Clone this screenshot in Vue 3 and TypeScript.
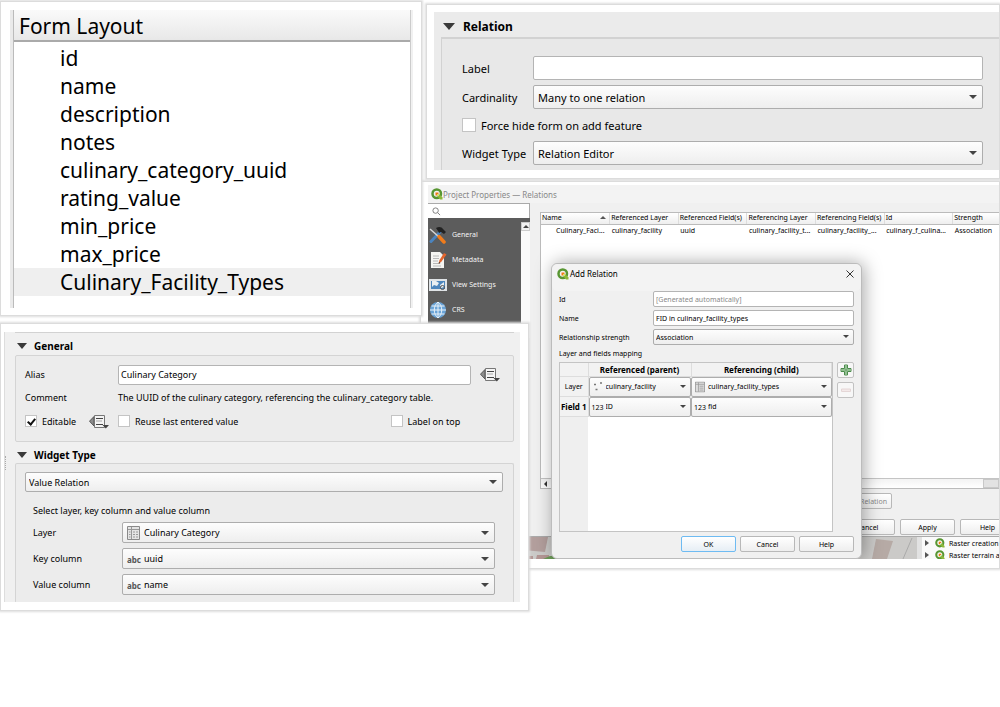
<script setup lang="ts">
import { ref } from 'vue'

const fields: string[] = [
  'id', 'name', 'description', 'notes', 'culinary_category_uuid',
  'rating_value', 'min_price', 'max_price', 'Culinary_Facility_Types',
]
const selected = ref('Culinary_Facility_Types')
const columns: string[] = ['Name', 'Referenced Layer', 'Referenced Field(s)', 'Referencing Layer', 'Referencing Field(s)', 'Id', 'Strength']
const relation: string[] = ['Culinary_Faci...', 'culinary_facility', 'uuid', 'culinary_facility_t...', 'culinary_facility_...', 'culinary_f_culina...', 'Association']
const tools: string[] = ['Raster creation', 'Raster terrain a']
const alias = ref('Culinary Category')
const relationLabel = ref('')
const relationName = ref('FID in culinary_facility_types')
const editable = ref(true)
const reuse = ref(false)
const labelOnTop = ref(false)
const forceHide = ref(false)
</script>

<template>
  <main class="board">
    <div class="left">
      <section class="card form-card">
        <div class="form-list">
          <h2>Form Layout</h2>
          <ul>
            <li v-for="f in fields" :key="f" :class="{ on: f === selected }" @click="selected = f">{{ f }}</li>
          </ul>
        </div>
      </section>

      <section class="card general-card">
        <div class="general-panel">
          <div class="rule"></div>
          <h3><i class="fold"></i>General</h3>
          <div class="group general-group">
            <label for="alias">Alias</label>
            <div class="alias-row">
              <input id="alias" v-model="alias" type="text" class="text" />
              <button class="override" aria-label="Alias override">
                <svg viewBox="0 0 20 15"><path d="M5 2.500V12L0.500 7.200Z" fill="#8c8c8c" stroke="#555" /><path d="M5.500 1.500h10v12h-10z" fill="#f4f4f4" stroke="#777" /><path d="M7 4.500h7M7 10.500h7" stroke="#444" stroke-width="1.200" /><path d="M7 7h6" stroke="#aaa" /><path d="M13.500 11H20l-3.200 3.500z" fill="#444" /></svg>
              </button>
            </div>
            <span>Comment</span>
            <span>The UUID of the culinary category, referencing the culinary_category table.</span>
            <div class="edit-row">
              <label class="check"><input v-model="editable" type="checkbox" />Editable</label>
              <button class="override" aria-label="Editable override">
                <svg viewBox="0 0 20 15"><path d="M5 2.500V12L0.500 7.200Z" fill="#8c8c8c" stroke="#555" /><path d="M5.500 1.500h10v12h-10z" fill="#f4f4f4" stroke="#777" /><path d="M7 4.500h7M7 10.500h7" stroke="#444" stroke-width="1.200" /><path d="M7 7h6" stroke="#aaa" /><path d="M13.500 11H20l-3.200 3.500z" fill="#444" /></svg>
              </button>
            </div>
            <div class="reuse-row">
              <label class="check"><input v-model="reuse" type="checkbox" />Reuse last entered value</label>
              <label class="check"><input v-model="labelOnTop" type="checkbox" />Label on top</label>
            </div>
          </div>
          <h3><i class="fold"></i>Widget Type</h3>
          <div class="group widget-group">
            <div class="combo"><select aria-label="Widget type"><option>Value Relation</option></select></div>
            <div class="columns">
              <p>Select layer, key column and value column</p>
              <label for="vr-layer">Layer</label>
              <div class="combo with-icon">
                <svg class="sheet" viewBox="0 0 13 14"><path d="M.5.5h12v13H.5z" fill="#e4e4e4" stroke="#8a8a8a" /><path d="M1 3.500h11M4.500 1v12M6 6h2M9 6h2M6 8.500h2M9 8.500h2M6 11h2M9 11h2M2 6h1.500M2 8.500h1.500M2 11h1.500" stroke="#999" /></svg>
                <select id="vr-layer"><option>Culinary Category</option></select>
              </div>
              <label for="vr-key">Key column</label>
              <div class="combo with-icon"><b class="type">abc</b><select id="vr-key"><option>uuid</option></select></div>
              <label for="vr-value">Value column</label>
              <div class="combo with-icon"><b class="type">abc</b><select id="vr-value"><option>name</option></select></div>
            </div>
          </div>
        </div>
      </section>
    </div>

    <div class="right">
      <section class="card relation-card">
        <div class="relation-panel">
          <h3><i class="fold"></i>Relation</h3>
          <div class="relation-group">
            <label for="rel-label">Label</label>
            <input id="rel-label" v-model="relationLabel" type="text" class="text" />
            <label for="rel-card">Cardinality</label>
            <div class="combo"><select id="rel-card"><option>Many to one relation</option></select></div>
            <label class="check wide"><input v-model="forceHide" type="checkbox" />Force hide form on add feature</label>
            <label for="rel-widget">Widget Type</label>
            <div class="combo"><select id="rel-widget"><option>Relation Editor</option></select></div>
          </div>
        </div>
      </section>

      <section class="card project-card">
        <div class="desktop">
          <div class="window">
            <header class="titlebar">
              <svg class="logo" viewBox="0 0 24 24"><circle cx="11.500" cy="11.500" r="8.500" fill="none" stroke="#589632" stroke-width="5" /><path d="M13 13h4l6 6v4h-5l-5-6z" fill="#8cb83a" /><path d="M9 9h6v3h-3v3H9z" fill="#ee7913" /><path d="M12 12l4 4" stroke="#f0e64a" stroke-width="2" /></svg>
              <span>Project Properties — Relations</span>
            </header>
            <div class="window-body">
              <aside class="side">
                <div class="search">
                  <svg viewBox="0 0 10 10"><circle cx="4" cy="4" r="3" fill="none" stroke="#777" /><path d="M6.200 6.200 9 9" stroke="#777" /></svg>
                  <input type="text" aria-label="Search settings" />
                </div>
                <div class="side-body">
                  <nav>
                    <a href="#general">
                      <svg viewBox="0 0 18 18"><path d="M2 15.500 11 6" stroke="#4b84bf" stroke-width="3" stroke-linecap="round" /><path d="M1 3l9 8" stroke="#d6d6d6" stroke-width="1.500" /><path d="M10 10.500 15 16" stroke="#f07c1c" stroke-width="3.500" stroke-linecap="round" /><path d="M7 2c3-2 6-1 7 1l3 3-2 2-3-2-2 1-1-2z" fill="#222" /></svg>General
                    </a>
                    <a href="#metadata">
                      <svg viewBox="0 0 18 18"><path d="M2 1h9l4 4v12H2z" fill="#f5f5f2" /><path d="M4 5h6M4 7.500h6M4 10h5M4 12.500h5M4 15h8" stroke="#b8b8b8" /><path d="m9.500 13 1-4L15 2l2.500 1.500-5 7z" fill="#e4652d" /><path d="m9.500 13 .5-2 1.500 1z" fill="#333" /></svg>Metadata
                    </a>
                    <a href="#view">
                      <svg viewBox="0 0 18 18"><path d="M0 3h18v12H0z" fill="#dfe3e6" /><path d="M2 5h14v8H2z" fill="#4d86bd" /><path d="M3 5h4l3 2-2 3-3-1-2 2zM11 9l4-3v5l-3 1z" fill="#e9eff3" /><circle cx="13.500" cy="11.500" r="2" fill="none" stroke="#555" /></svg>View Settings
                    </a>
                    <a href="#crs">
                      <svg viewBox="0 0 18 18"><circle cx="9" cy="9" r="8" fill="#6aa4d8" /><path d="M1 9h16M2.500 5h13M2.500 13h13M9 1v16M9 1c-5 4-5 12 0 16M9 1c5 4 5 12 0 16" fill="none" stroke="#e8f1f8" /></svg>CRS
                    </a>
                  </nav>
                  <div class="scroll"><i class="up"></i></div>
                </div>
              </aside>
              <div class="content">
                <div class="table-wrap">
                  <table class="relations">
                    <thead><tr><th v-for="(c, i) in columns" :key="c">{{ c }}<i v-if="i === 0" class="sort"></i></th></tr></thead>
                    <tbody><tr><td v-for="c in relation" :key="c">{{ c }}</td></tr></tbody>
                  </table>
                  <div class="hscroll"><i class="back"></i><span></span></div>
                </div>
                <div class="actions tools"><button disabled>Relation</button></div>
                <div class="actions"><button>Cancel</button><button>Apply</button><button>Help</button></div>
              </div>
            </div>
          </div>
          <div class="below">
            <svg class="map" viewBox="0 0 490 22" preserveAspectRatio="xMaxYMin slice"><path d="M0 0h490v22H0z" fill="#cbcac8" /><path d="M96 0h25l-3 15-22-2z" fill="#b39f9d" /><path d="M100 19h6v3h-6zm10-1h12v4h-13z" fill="#b39694" /><path d="m116 22 7-3h8v3z" fill="#6b9a57" /><path d="m449 2 17 2-6 18h-15z" fill="#b6aaa5" /><path d="m485 1-9 21" stroke="#aaa" /></svg>
            <div class="tree">
              <div v-for="t in tools" :key="t">
                <i class="caret"></i>
                <svg class="logo" viewBox="0 0 24 24"><circle cx="11.500" cy="11.500" r="8.500" fill="none" stroke="#589632" stroke-width="5" /><path d="M13 13h4l6 6v4h-5l-5-6z" fill="#8cb83a" /><path d="M9 9h6v3h-3v3H9z" fill="#ee7913" /></svg>
                <span>{{ t }}</span>
              </div>
            </div>
          </div>

          <div class="dialog" role="dialog" aria-label="Add Relation">
            <header class="dialog-title">
              <svg class="logo" viewBox="0 0 24 24"><circle cx="11.500" cy="11.500" r="8.500" fill="none" stroke="#589632" stroke-width="5" /><path d="M13 13h4l6 6v4h-5l-5-6z" fill="#8cb83a" /><path d="M9 9h6v3h-3v3H9z" fill="#ee7913" /><path d="M12 12l4 4" stroke="#f0e64a" stroke-width="2" /></svg>
              <span>Add Relation</span>
              <button aria-label="Close"><svg viewBox="0 0 8 8"><path d="M.5.5l7 7M7.500.5l-7 7" stroke="#333" /></svg></button>
            </header>
            <div class="dialog-form">
              <label for="d-id">Id</label><input id="d-id" type="text" class="text" placeholder="[Generated automatically]" />
              <label for="d-name">Name</label><input id="d-name" v-model="relationName" type="text" class="text" />
              <label for="d-str">Relationship strength</label><div class="combo"><select id="d-str"><option>Association</option></select></div>
            </div>
            <p>Layer and fields mapping</p>
            <div class="mapping">
              <div class="mapping-box">
                <table>
                  <colgroup><col class="c0" /><col class="c1" /><col /></colgroup>
                  <thead><tr><th></th><th>Referenced (parent)</th><th>Referencing (child)</th></tr></thead>
                  <tbody>
                    <tr>
                      <th class="plain">Layer</th>
                      <td><div class="combo with-icon"><svg class="sheet" viewBox="0 0 10 11"><path d="M1 3h2M7 1.500h2M2.500 8h2" stroke="#777" stroke-width="1.500" /></svg><select aria-label="Referenced layer"><option>culinary_facility</option></select></div></td>
                      <td><div class="combo with-icon"><svg class="sheet" viewBox="0 0 13 14"><path d="M.5.5h12v13H.5z" fill="#ddd" stroke="#888" /><path d="M1 3.500h11M4.500 1v12M6 6h5M6 8.500h5M6 11h5" stroke="#999" /></svg><select aria-label="Referencing layer"><option>culinary_facility_types</option></select></div></td>
                    </tr>
                    <tr>
                      <th>Field 1</th>
                      <td><div class="combo with-icon"><span class="type">123</span><select aria-label="Referenced field"><option>ID</option></select></div></td>
                      <td><div class="combo with-icon"><span class="type">123</span><select aria-label="Referencing field"><option>fid</option></select></div></td>
                    </tr>
                  </tbody>
                </table>
                <div class="blank"></div>
              </div>
              <div class="side-buttons">
                <button aria-label="Add field"><svg viewBox="0 0 12 12"><path d="M4.500 1h3v3.500H11v3H7.500V11h-3V7.500H1v-3h3.500z" fill="#c6e2c4" stroke="#4b8a4b" /><path d="M6 2v8M2 6h8" stroke="#5f9c5f" /></svg></button>
                <button aria-label="Remove field" disabled><svg viewBox="0 0 12 12"><path d="M1.500 5h9v2.500h-9z" fill="#f3e9e9" stroke="#e4d6d6" /></svg></button>
              </div>
            </div>
            <footer><button class="ok">OK</button><button>Cancel</button><button>Help</button></footer>
          </div>
        </div>
      </section>
    </div>
  </main>
</template>

<style>
body { background: #fff; }
</style>

<style scoped>
* { box-sizing: border-box; }
.board { display: flex; align-items: flex-start; min-height: 100vh; overflow: hidden; font-family: "Noto Sans", "Open Sans", sans-serif; color: #000; }
h2, h3, p, ul { margin: 0; padding: 0; list-style: none; }
.card { background: #fff; border: 1px solid #dcdcdc; box-shadow: 0 0 2px 1px #ddd; }
.left { width: 42%; flex: none; position: relative; z-index: 2; }
.right { flex: 1; min-width: 0; }

.form-card { margin: 1px 0 0; padding: 8px 10px 7px 8px; width: calc(100% + 2px); }
.form-list { border-left: 1px solid #bbb; border-right: 1px solid #ccc; box-shadow: -3px 0 0 #eaeaea, 2px 0 0 #f1f1f1; margin-left: 4px; min-height: 298px; }
.form-list h2 { font-size: 21px; font-weight: 400; line-height: 31px; height: 32px; padding: 1px 5px 0; background: linear-gradient(#fafafa, #e8e8e8); border-bottom: 2px solid #aaa; }
.form-list ul { padding-top: 2px; }
.form-list li { font-size: 21px; line-height: 28px; padding-left: 46px; }
.form-list li.on { background: #efefef; }

.general-card { width: 126%; margin-top: 7px; padding: 8px 8px 8px 1px; font-size: 9px; }
.general-panel { background: #f0f0f0; border-left: 1px solid #ddd; padding: 0 6px 0 10px; margin-left: 2px; overflow: hidden; height: 270px; position: relative; }
.general-panel::before { content: ""; position: absolute; left: 0; top: 124px; height: 14px; border-left: 1px dotted #aaa; }
.general-panel .rule { height: 1px; background: #d2d2d2; }
h3 { display: flex; align-items: center; font-weight: 700; }
.general-panel h3 { height: 22px; padding-top: 3px; font-size: 10px; }
.general-panel .group + h3 { height: 21px; padding-top: 4px; }
.fold { border: 5px solid transparent; border-top: 6px solid #3a3a3a; border-bottom: 0; margin: 0 7px 0 2px; }
.group { background: #ececec; border: 1px solid #d4d4d4; border-radius: 2px; }
.general-group { display: grid; grid-template-columns: 93px 1fr; grid-template-rows: 19px 25px 20px; row-gap: 1px; align-items: center; padding: 9px 9px 10px 9px; }
.alias-row { display: flex; gap: 9px; align-items: center; padding-right: 4px; }
.text { flex: 1; min-width: 0; width: 100%; height: 20px; border: 1px solid #b4b4b4; border-radius: 2px; background: #fff; font: inherit; color: inherit; padding: 0 2px; outline: 0; }
.override { border: 0; background: none; padding: 0; width: 20px; height: 15px; flex: none; }
.override svg { display: block; width: 20px; height: 15px; }
.edit-row, .reuse-row { display: flex; justify-content: space-between; align-items: center; }
.edit-row { padding-right: 9px; }
.reuse-row { padding-right: 44px; }
.check { display: flex; align-items: center; gap: 5px; }
.check input { appearance: none; width: 12px; height: 12px; margin: 0; background: #fff; border: 1px solid #c4c4c4; display: grid; place-items: center; }
.check input:checked::after { content: ""; width: 3px; height: 6px; border: solid #111; border-width: 0 2px 2px 0; transform: rotate(40deg); }
.combo { position: relative; min-width: 0; }
.combo select { display: block; appearance: none; width: 100%; height: 20px; border: 1px solid #adadad; border-radius: 2px; background: linear-gradient(#fdfdfd, #eee); font: inherit; color: inherit; padding: 0 14px 0 4px; }
.combo::after { content: ""; position: absolute; right: 6px; top: 50%; margin-top: -2px; border: 4px solid transparent; border-top-color: #444; border-bottom: 0; pointer-events: none; }
.with-icon .sheet, .with-icon .type { position: absolute; left: 5px; top: 50%; transform: translateY(-50%); pointer-events: none; }
.widget-group { padding: 8px 10px 0 9px; border-bottom: 0; height: 140px; }
.widget-group > .combo select { padding-left: 3px; }
.columns { display: grid; grid-template-columns: 89px 1fr; row-gap: 5px; align-items: center; padding: 10px 8px 0; }
.columns p { grid-column: 1 / 3; line-height: 18px; margin-bottom: -3px; }
.columns .with-icon select { height: 21px; padding-left: 21px; }
.columns .sheet { width: 13px; height: 14px; }
.columns .type { font-size: 8px; color: #555; }

.relation-card { margin: 4px 0 0 6px; padding: 7px 0 8px 7px; font-size: 11px; }
.relation-panel { background: #ebebeb; padding: 0 0 0 7px; height: 158px; }
.relation-panel h3 { height: 25px; padding-top: 3px; font-size: 12px; }
.relation-panel .fold { margin: 0 8px 0 2px; border-width: 7px 6px 0; }
.relation-group { display: grid; grid-template-columns: 71px 1fr; grid-template-rows: 24px 24px 22px 24px; row-gap: 5px; align-items: center; background: #e8e8e8; border: 1px solid #d2d2d2; border-width: 2px 0 0 1px; padding: 17px 16px 0 20px; height: 133px; }
.relation-group .text, .relation-group select { height: 24px; }
.relation-group .wide { grid-column: 1 / 3; }
.relation-group .check input { width: 14px; height: 14px; }

.project-card { margin: 2px 0 0; padding: 3px 0 8px 7px; font-size: 7px; height: 388px; }
.desktop { position: relative; height: 374px; }
.window { background: #f0f0f0; height: 352px; border-bottom: 1px solid #aaa; }
.titlebar { height: 18px; display: flex; align-items: center; padding-left: 3px; background: #f3f3f3; color: #888; font-size: 8px; }
.logo { width: 12px; height: 12px; flex: none; }
.window-body { display: flex; height: 333px; }
.side { width: 102px; flex: none; }
.search { height: 15px; background: #fff; border: 1px solid #aaa; border-width: 1px 1px 0 0; display: flex; align-items: center; padding-left: 4px; }
.search svg { width: 9px; height: 9px; flex: none; }
.search input { border: 0; outline: 0; min-width: 0; width: 100%; height: 12px; padding: 0; background: none; font: inherit; }
.side-body { display: flex; background: #5c5c5c; height: 120px; padding-top: 4px; }
nav { flex: 1; }
nav a { display: flex; align-items: center; gap: 5px; height: 25px; padding-left: 1px; color: #f4f4f4; text-decoration: none; }
nav svg { width: 18px; height: 18px; flex: none; }
.scroll { width: 9px; background: #fafafa; }
.scroll .up { display: block; height: 9px; border: 1px solid #ccc; background: #f2f2f2; position: relative; }
.scroll .up::after { content: ""; position: absolute; left: 1px; top: 2px; border: 3px solid transparent; border-bottom-color: #444; border-top: 0; }
.content { flex: 1; min-width: 0; padding: 9px 0 0 10px; overflow: hidden; }
.table-wrap { background: #fff; border: 1px solid #bbb; border-right: 0; height: 277px; display: flex; flex-direction: column; justify-content: space-between; }
.relations { table-layout: fixed; width: 105%; border-collapse: collapse; }
.relations th { text-align: left; font-weight: 400; height: 11px; line-height: 10px; padding: 0 1px; white-space: nowrap; background: linear-gradient(#fff, #eee); border-right: 1px solid #ddd; border-bottom: 1px solid #bbb; position: relative; }
.relations td { height: 11px; line-height: 11px; padding: 0 0 0 2px; white-space: nowrap; }
.relations td:first-child { padding-left: 15px; }
.sort { position: absolute; right: 3px; top: 3px; border: 3px solid transparent; border-bottom-color: #555; border-top: 0; }
.hscroll { height: 10px; border-top: 1px solid #c4c4c4; background: linear-gradient(#f3f3f3, #fff); display: flex; justify-content: space-between; align-items: center; }
.back { border: 3px solid transparent; border-right-color: #333; }
.hscroll span { width: 16px; height: 9px; background: #e2e2e2; border: 1px solid #c8c8c8; }
.actions { display: flex; justify-content: flex-end; gap: 5px; margin-right: -16px; }
.actions.tools { padding: 4px 123px 10px 0; }
button { font: inherit; color: inherit; }
.actions button, footer button { width: 55px; height: 16px; border: 1px solid #b8b8b8; border-radius: 2px; background: linear-gradient(#fff, #eee); padding: 0; }
.actions.tools button { color: #888; text-align: right; padding-right: 4px; }
.below { display: flex; height: 22px; overflow: hidden; }
.map { flex: 1; min-width: 0; height: 22px; }
.tree { width: 82px; flex: none; background: #fafafa; border-left: 5px solid #e2e2e2; }
.tree div { display: flex; align-items: center; height: 12px; gap: 4px; padding-left: 3px; white-space: nowrap; }
.tree .logo { width: 10px; height: 10px; margin: 0 0 0 2px; }
.caret { border: 3px solid transparent; border-left: 4px solid #555; border-right: 0; }

.dialog { position: absolute; left: 123px; bottom: 0; width: 311px; height: 296px; background: #f0f0f0; border: 1px solid #bcbcbc; border-radius: 6px; box-shadow: 2px 0 18px rgba(0, 0, 0, .35); padding: 0 7px; clip-path: inset(-30px -30px 0 -30px); }
.dialog-title { height: 27px; margin: 0 -7px; padding: 0 7px 8px 5px; display: flex; align-items: center; gap: 1px; background: #f3f3f3; border-radius: 6px; font-size: 8px; }
.dialog-title span { flex: 1; }
.dialog-title button { border: 0; background: none; padding: 0; width: 8px; height: 8px; }
.dialog-title button svg { display: block; width: 8px; height: 8px; }
.dialog-form { display: grid; grid-template-columns: 94px 1fr; row-gap: 3px; align-items: center; }
.dialog .text, .dialog-form select { height: 16px; }
.dialog-form select { padding-left: 2px; }
.dialog .text { padding: 0 2px; }
.dialog .text::placeholder { color: #888; opacity: 1; }
.dialog .combo::after { border-width: 3px 3px 0; right: 5px; }
.dialog p { line-height: 10px; padding: 4px 0 3px; }
.mapping { display: flex; gap: 4px; height: 170px; }
.mapping-box { flex: 1; min-width: 0; border: 1px solid #c4c4c4; display: flex; flex-direction: column; }
.mapping table { width: 100%; table-layout: fixed; border-collapse: collapse; }
.c0 { width: 28px; }
.c1 { width: 103px; }
.mapping th { padding: 0; height: 13px; line-height: 11px; font-size: 8px; white-space: nowrap; background: #f2f2f2; border: 1px solid #ddd; border-width: 0 1px 1px 0; }
.mapping .plain { font-weight: 400; font-size: 7px; }
.mapping td { padding: 0; height: 20px; }
.mapping .combo select { height: 20px; padding-left: 16px; }
.mapping .sheet { width: 10px; height: 11px; left: 4px; }
.mapping .type { left: 3px; }
.blank { flex: 1; border-left: 28px solid #efefef; background: #fff; }
.side-buttons { display: flex; flex-direction: column; gap: 4px; }
.side-buttons button { width: 17px; height: 16px; border: 1px solid #c2c2c2; border-radius: 2px; background: #f7f7f7; padding: 1px; display: grid; place-items: center; }
.side-buttons svg { width: 12px; height: 12px; }
footer { display: flex; justify-content: flex-end; gap: 4px; padding-top: 4px; }
footer .ok { border-color: #6ebbf2; background: linear-gradient(#fff, #e6eef5); }
</style>
